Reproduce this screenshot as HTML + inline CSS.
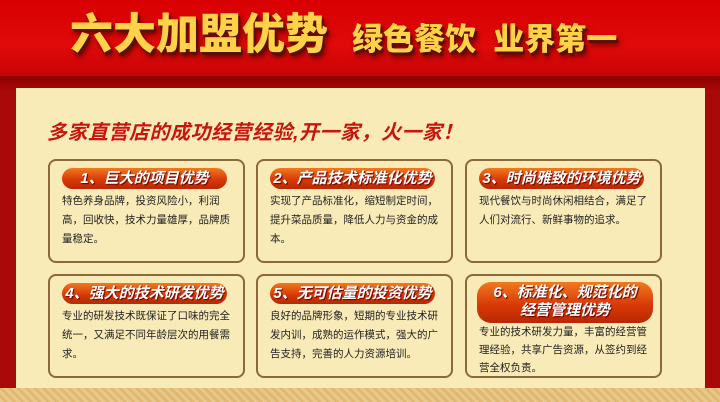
<!DOCTYPE html>
<html><head><meta charset="utf-8"><style>
*{margin:0;padding:0;box-sizing:border-box}
body{width:720px;height:402px;overflow:hidden;position:relative;background:#a80a0a;font-family:"Liberation Sans","Noto Sans CJK SC",sans-serif}
.top{position:absolute;left:0;top:0;width:720px;height:76px;background:linear-gradient(#d80000,#e00a0a 60%,#c80404)}
.band{position:absolute;left:0;top:76px;width:720px;height:14px;background:linear-gradient(#8a0000,#a80808)}
.t1{position:absolute;left:70px;top:10px;font-size:43px;line-height:50px;font-weight:900;color:#ffd24a;letter-spacing:0;text-shadow:2px 3px 0 #5a1000,3px 5px 6px #600}
.t2{position:absolute;left:352px;top:22px;font-size:31px;line-height:36px;font-weight:900;color:#ffd24a;text-shadow:2px 3px 0 #5a1000,3px 5px 6px #600}
.panel{position:absolute;left:16px;top:88px;width:689px;height:300px;background:#f9ebb8}
.bottom{position:absolute;left:0;top:388px;width:720px;height:14px;background:repeating-linear-gradient(45deg,#e9c98a 0 3px,#dfb872 3px 6px)}
.sub{position:absolute;left:47px;top:116px;font-size:20px;font-weight:bold;font-style:italic;color:#c8160c;letter-spacing:0.5px}
.card{position:absolute;width:197px;height:104px;border:2px solid #8a6a3a;border-radius:8px;background:#f9ebb8}
.pill{position:absolute;left:12px;top:7px;width:165px;height:21px;border-radius:11px;background:linear-gradient(#f07a20,#d83a08 55%,#b82800);color:#fff;font-weight:bold;font-style:italic;font-size:15px;text-align:center;line-height:21px;text-shadow:1px 1px 1px #600}
.txt{position:absolute;left:12px;top:31px;width:176px;font-size:10.5px;line-height:19px;color:#222}
</style></head><body>
<div class="top"></div><div class="band"></div>
<div class="t1">六大加盟优势</div>
<div class="t2">绿色餐饮&nbsp;&nbsp;业界第一</div>
<div class="panel"></div>
<div class="bottom"></div>
<div class="sub">多家直营店的成功经营经验,开一家，火一家！</div>

<div class="card" style="left:48px;top:159px"><div class="pill">1、巨大的项目优势</div><div class="txt">特色养身品牌，投资风险小，利润高，回收快，技术力量雄厚，品牌质量稳定。</div></div>
<div class="card" style="left:256px;top:159px"><div class="pill">2、产品技术标准化优势</div><div class="txt">实现了产品标准化，缩短制定时间，提升菜品质量，降低人力与资金的成本。</div></div>
<div class="card" style="left:465px;top:159px"><div class="pill">3、时尚雅致的环境优势</div><div class="txt">现代餐饮与时尚休闲相结合，满足了人们对流行、新鲜事物的追求。</div></div>

<div class="card" style="left:48px;top:274px"><div class="pill">4、强大的技术研发优势</div><div class="txt">专业的研发技术既保证了口味的完全统一，又满足不同年龄层次的用餐需求。</div></div>
<div class="card" style="left:256px;top:274px"><div class="pill">5、无可估量的投资优势</div><div class="txt">良好的品牌形象，短期的专业技术研发内训，成熟的运作模式，强大的广告支持，完善的人力资源培训。</div></div>
<div class="card" style="left:465px;top:274px"><div class="pill" style="left:10px;width:176px;top:6px;height:41px;line-height:18px;padding-top:2px;border-radius:14px">6、标准化、规范化的<br>经营管理优势</div><div class="txt" style="top:47px;line-height:18px">专业的技术研发力量，丰富的经营管理经验，共享广告资源，从签约到经营全权负责。</div></div>
</body></html>
